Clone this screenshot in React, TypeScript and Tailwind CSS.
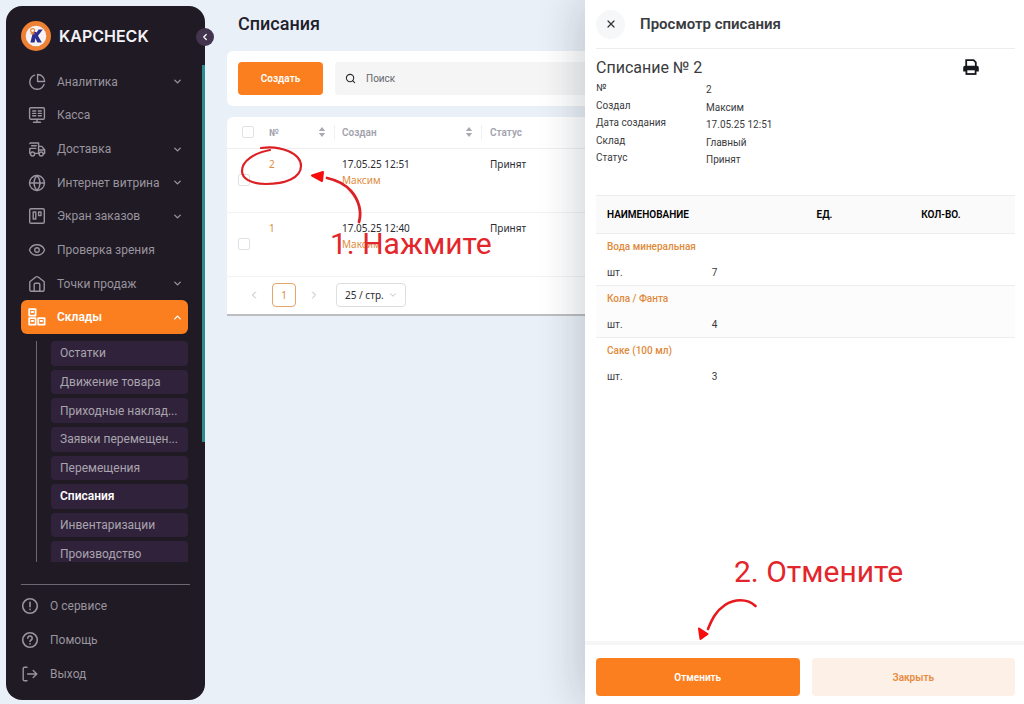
import React from 'react';
import { ChevronDown, ChevronLeft, ChevronRight, ChevronUp, Eye, Globe, Search, X } from 'lucide-react';

const iconProps = {
  width: 18,
  height: 18,
  viewBox: '0 0 18 18',
  fill: 'none',
  stroke: 'currentColor',
  strokeWidth: 1.4,
  strokeLinecap: 'round' as const,
  strokeLinejoin: 'round' as const,
  'aria-hidden': true,
};

const PieIcon = () => (
  <svg {...iconProps}>
    <path d="M6.6 2.1A7.3 7.3 0 1 0 16 11.4" />
    <path d="M9.6 1.5v7h7a7 7 0 0 0-7-7z" />
  </svg>
);

const MonitorIcon = () => (
  <svg {...iconProps}>
    <rect x="1.6" y="1.8" width="14.8" height="11.4" rx="1.2" />
    <path d="M4.7 5h3M4.7 7.4h3M4.7 9.8h3M10.3 5h3M10.3 7.4h3M10.3 9.8h3M9 13.2v3M5.5 16.2h7" />
  </svg>
);

const TruckIcon = () => (
  <svg {...iconProps}>
    <path d="M1.8 3.6Q2 3 2.800 3H10.600v10.400H7M3.600 5.800h4.600M1.800 8.400h6M1.800 8.400v5.200M11 6.400h2.800l2.800 3.400v3.800h-1.200M11 10h5.400" />
    <circle cx="4.6" cy="14" r="2" />
    <circle cx="13.2" cy="14" r="2" />
  </svg>
);

const BoardIcon = () => (
  <svg {...iconProps}>
    <rect x="1.7" y="1.7" width="14.6" height="14.6" rx="1.4" />
    <rect x="5.2" y="5" width="2.6" height="7" />
    <rect x="10.6" y="5" width="2.4" height="3.6" />
  </svg>
);

const HomeIcon = () => (
  <svg {...iconProps}>
    <path d="M1.8 6.800 7.800 2Q9 1.200 10.200 2l6 4.800v8q0 1.500-1.500 1.500H3.300q-1.500 0-1.500-1.500z" />
    <path d="M6.2 16V9.4q0-1.2 1.2-1.2h3.2q1.2 0 1.2 1.2V16" />
  </svg>
);

const BoxesIcon = () => (
  <svg {...iconProps} strokeWidth={1.8}>
    <rect x="1.2" y="1.2" width="6.4" height="6.4" />
    <rect x="1.2" y="10.2" width="6.4" height="6.4" />
    <rect x="10.2" y="10.2" width="6.4" height="6.4" />
    <path d="M3.6 4h1.6M3.6 13h1.6M12.6 13h1.6" />
  </svg>
);

const InfoIcon = () => (
  <svg {...iconProps} strokeWidth={1.6}>
    <circle cx="9" cy="9" r="7.3" />
    <path d="M9 5.2v4.6M9 12.3v.3" />
  </svg>
);

const HelpIcon = () => (
  <svg {...iconProps} strokeWidth={1.6}>
    <circle cx="9" cy="9" r="7.3" />
    <path d="M6.8 7.2a2.2 2.2 0 1 1 3.4 1.8c-.8.5-1.2.8-1.2 1.5M9 12.8v.2" />
  </svg>
);

const ExitIcon = () => (
  <svg {...iconProps}>
    <path d="M6 2.2H3.6q-1.4 0-1.4 1.4v10.8q0 1.4 1.4 1.4H6M6.6 9h9M12.2 5.4 15.8 9l-3.6 3.6" />
  </svg>
);

const Logo = () => (
  <svg width="30" height="30" viewBox="0 0 30 30" aria-hidden="true">
    <circle cx="15" cy="15" r="15" fill="#ee8133" />
    <circle cx="15" cy="15" r="10.3" fill="#f6f3f5" />
    <path d="M12 11h3.600l-2 10.500H9.400z" fill="#2c2f8e" />
    <path d="M17.600 8.500h4.200L17 14.800l3.800 6.700h-4.400L13.200 15z" fill="#2c2f8e" />
    <circle cx="11.6" cy="9.6" r="2" fill="none" stroke="#ee8133" strokeWidth="1.1" />
    <path d="M9.6 12.8h4" stroke="#ee8133" strokeWidth="1.1" />
  </svg>
);

const PrintIcon = () => (
  <svg width="16" height="16" viewBox="0 0 16 16" aria-hidden="true">
    <path d="M3.2 8V1.200h7.400l2.200 2.200V8" fill="#fff" stroke="#16181d" strokeWidth="1.8" />
    <path d="M2.400 6.800h11.200A2 2 0 0 1 15.800 8.800v3.800H.2V8.800a2 2 0 0 1 2.200-2z" fill="#16181d" />
    <rect x="3.4" y="10.4" width="9.2" height="4.6" fill="#fff" stroke="#16181d" strokeWidth="1.8" />
  </svg>
);

const SortIcon = () => (
  <svg width="8" height="10" viewBox="0 0 8 10" fill="#a9a9b0" aria-hidden="true">
    <path d="M4 0 7.2 4H.8zM4 10 .8 6h6.4z" />
  </svg>
);

const menu = [
  { label: 'Аналитика', icon: <PieIcon />, nested: true },
  { label: 'Касса', icon: <MonitorIcon />, nested: false },
  { label: 'Доставка', icon: <TruckIcon />, nested: true },
  { label: 'Интернет витрина', icon: <Globe size={18} strokeWidth={1.8} />, nested: true },
  { label: 'Экран заказов', icon: <BoardIcon />, nested: true },
  { label: 'Проверка зрения', icon: <Eye size={18} strokeWidth={1.8} />, nested: false },
  { label: 'Точки продаж', icon: <HomeIcon />, nested: true },
];

const submenu = [
  'Остатки',
  'Движение товара',
  'Приходные наклад...',
  'Заявки перемещен...',
  'Перемещения',
  'Списания',
  'Инвентаризации',
  'Производство',
];

const bottomMenu = [
  { label: 'О сервисе', icon: <InfoIcon /> },
  { label: 'Помощь', icon: <HelpIcon /> },
  { label: 'Выход', icon: <ExitIcon /> },
];

const documents = [
  { id: 2, date: '17.05.25 12:51', author: 'Максим', status: 'Принят' },
  { id: 1, date: '17.05.25 12:40', author: 'Максим', status: 'Принят' },
];

const details = [
  ['№', '2'],
  ['Создал', 'Максим'],
  ['Дата создания', '17.05.25 12:51'],
  ['Склад', 'Главный'],
  ['Статус', 'Принят'],
];

const products = [
  { name: 'Вода минеральная', unit: 'шт.', count: 7 },
  { name: 'Кола / Фанта', unit: 'шт.', count: 4 },
  { name: 'Саке (100 мл)', unit: 'шт.', count: 3 },
];

function Sidebar() {
  return (
    <aside className="relative mt-1.5 mb-1 ml-1.5 flex w-[199px] shrink-0 flex-col rounded-2xl bg-[#1f1a24] px-[15px] text-xs text-[#99949e]">
      <div className="flex h-[59px] items-center gap-2 text-base font-semibold text-[#f4f2f6]">
        <Logo />
        <span className="font-['Inter',sans-serif]">KAPCHECK</span>
      </div>

      <nav>
        <ul className="grid h-[269px] grid-rows-8">
          {menu.map((item) => (
            <li key={item.label}>
              <a href="#" className="flex h-full items-center pr-[7px] pl-[7px]">
                {item.icon}
                <span className="ml-[11px] flex-1">{item.label}</span>
                {item.nested && <ChevronDown size={11} strokeWidth={3} />}
              </a>
            </li>
          ))}
          <li>
            <a href="#" className="mr-0.5 flex h-full items-center rounded-md bg-[#fc7f1f] pr-[5px] pl-[7px] font-semibold text-white">
              <BoxesIcon />
              <span className="ml-[11px] flex-1">Склады</span>
              <ChevronUp size={11} strokeWidth={3} />
            </a>
          </li>
        </ul>
        <div className="mt-[7px] mr-0.5 ml-[15px] h-[221px] overflow-hidden border-l border-[#6d6773] pl-3.5">
          <ul className="grid h-[225px] grid-rows-8 gap-1">
            {submenu.map((label) => (
              <li key={label} className="min-w-0">
                <a
                  href="#"
                  className={
                    label === 'Списания'
                      ? 'flex h-full items-center rounded bg-[#30223b] px-[9px] font-semibold whitespace-nowrap text-white'
                      : 'flex h-full items-center rounded bg-[#30223b] px-[9px] whitespace-nowrap text-[#aaa4ae]'
                  }
                >
                  {label}
                </a>
              </li>
            ))}
          </ul>
        </div>
      </nav>

      <ul className="mt-[22px] flex flex-col border-t border-[#6d6773] pt-1">
        {bottomMenu.map((item) => (
          <li key={item.label}>
            <a href="#" className="flex h-[34px] items-center gap-[11px]">
              {item.icon}
              {item.label}
            </a>
          </li>
        ))}
      </ul>

      <div className="absolute top-[59px] right-0 h-[377px] w-[3px] bg-[#2c8b90]" />
      <button
        type="button"
        aria-label="Свернуть меню"
        className="absolute top-[22px] -right-[9px] flex size-[18px] items-center justify-center rounded-full bg-[#43354e] text-white"
      >
        <ChevronLeft size={10} strokeWidth={3} />
      </button>
    </aside>
  );
}

function DocumentsPage() {
  return (
    <main className="ml-[22px] min-w-0 flex-1 text-[#2c2c33]">
      <h1 className="ml-[11px] flex h-[51px] items-center pb-1 text-lg font-medium text-[#20202c]">Списания</h1>

      <div className="flex gap-3 rounded-l-md bg-white p-[11px]">
        <button type="button" className="h-[33px] w-[85px] shrink-0 rounded bg-[#fc7f1f] text-[10px] font-semibold text-white">
          Создать
        </button>
        <label className="flex h-[33px] flex-1 items-center gap-2.5 rounded bg-[#f5f5f5] px-2.5 text-[10px]">
          <Search size={11} strokeWidth={2.4} />
          <input type="search" aria-label="Поиск" placeholder="Поиск" className="min-w-0 flex-1 bg-transparent outline-none placeholder:text-[#66666b]" />
        </label>
      </div>

      <div className="mt-[11px] rounded-tl-md border-b-2 border-[#bcbec1] bg-white">
        <table className="w-full table-fixed text-left text-[10px]">
          <thead className="text-[#a2a2ad]">
            <tr className="h-[31px] border-b border-[#efeff1]">
              <th className="w-[34px] pl-[15px]">
                <input type="checkbox" aria-label="Выбрать все" className="block size-3 appearance-none rounded-xs border border-[#e2e2e5] bg-white" />
              </th>
              <th className="w-[74px] pl-2 font-semibold">
                <span className="flex items-center justify-between border-r border-[#f0f0f0] pr-2">№ <SortIcon /></span>
              </th>
              <th className="w-[147px] pl-[7px] font-semibold">
                <span className="flex items-center justify-between border-r border-[#f0f0f0] pr-2">Создан <SortIcon /></span>
              </th>
              <th className="pl-2 font-semibold">Статус</th>
            </tr>
          </thead>
          <tbody className="font-['Noto_Sans',sans-serif]">
            {documents.map((doc) => (
              <tr key={doc.id} className="h-16 border-b border-[#f2f2f4] align-top leading-4">
                <td className="pl-[11px] align-middle">
                  <input type="checkbox" aria-label={`Выбрать ${doc.id}`} className="block size-3 appearance-none rounded-xs border border-[#e2e2e5] bg-white" />
                </td>
                <td className="pt-[7px] pl-2">
                  <a href="#" className="text-[#e08b3c]">{doc.id}</a>
                </td>
                <td className="pt-[7px] pl-[7px]">
                  {doc.date}
                  <a href="#" className="block text-[#e08b3c]">{doc.author}</a>
                </td>
                <td className="pt-[7px] pl-2">{doc.status}</td>
              </tr>
            ))}
          </tbody>
        </table>
        <div className="flex h-[37px] items-center pl-[21px] font-['Noto_Sans',sans-serif] text-[10px]">
          <button type="button" aria-label="Назад" className="text-[#b9b9bd]">
            <ChevronLeft size={12} />
          </button>
          <button type="button" className="mx-3 size-6 rounded border border-[#e6a467] text-[#e08b3c]">1</button>
          <button type="button" aria-label="Вперёд" className="text-[#b9b9bd]">
            <ChevronRight size={12} />
          </button>
          <div className="relative ml-4 flex items-center">
            <select aria-label="Строк на странице" className="h-6 w-[70px] appearance-none rounded border border-[#dedee1] bg-white pl-2">
              <option>25 / стр.</option>
            </select>
            <ChevronDown size={10} className="pointer-events-none absolute right-2 text-[#b9b9bd]" />
          </div>
        </div>
      </div>
    </main>
  );
}

function Drawer() {
  return (
    <section
      aria-label="Просмотр списания"
      className="absolute inset-y-0 right-0 flex w-[439px] flex-col bg-white text-[10px] text-[#3a3b40] shadow-[-6px_0_40px_rgba(20,30,45,0.2)]"
    >
      <div className="flex-1 pr-[9px] pl-[11px]">
        <header className="flex h-[49px] items-center gap-[15px] border-b border-[#ededef]">
          <button type="button" aria-label="Закрыть окно" className="flex size-[29px] items-center justify-center rounded-full bg-[#f6f7f9] text-[#303035]">
            <X size={12} strokeWidth={2.4} />
          </button>
          <h2 className="text-[15px] font-semibold">Просмотр списания</h2>
        </header>

        <div className="flex h-[31px] items-end justify-between pr-9">
          <h3 className="text-base">Списание № 2</h3>
          <button type="button" aria-label="Печать" className="pb-[5px]">
            <PrintIcon />
          </button>
        </div>
        <dl className="grid h-[88px] grid-rows-5">
          {details.map(([label, value]) => (
            <div key={label} className="grid grid-cols-[110px_1fr] leading-4">
              <dt>{label}</dt>
              <dd className="pt-0.5">{value}</dd>
            </div>
          ))}
        </dl>

        <table className="mt-[27px] w-full table-fixed text-left">
          <thead className="bg-[#fafafa] text-black">
            <tr className="h-[38px] border-y border-[#ededef]">
              <th colSpan={2} className="pl-[11px] font-semibold">НАИМЕНОВАНИЕ</th>
              <th className="pl-[11px] font-semibold">ЕД.</th>
              <th className="pl-[11px] font-semibold">КОЛ-ВО.</th>
            </tr>
          </thead>
          {products.map((product) => (
            <tbody key={product.name} className="border-b border-[#ededef] last:border-0 odd:bg-[#fcfcfc]">
              <tr className="h-[26px]">
                <td colSpan={4} className="pl-[11px]">
                  <a href="#" className="font-medium text-[#e08b3c]">{product.name}</a>
                </td>
              </tr>
              <tr className="h-[26px]">
                <td className="pl-[11px]">{product.unit}</td>
                <td className="pl-[11px]">{product.count}</td>
                <td />
                <td />
              </tr>
            </tbody>
          ))}
        </table>
      </div>

      <footer className="flex gap-3 border-t-4 border-[#f6f6f7] pt-[13px] pr-[9px] pb-2 pl-[11px] font-semibold">
        <button type="button" className="h-[38px] flex-1 rounded-sm bg-[#fc7f1f] text-white">Отменить</button>
        <button type="button" className="h-[38px] flex-1 rounded-sm bg-[#fdf0e6] text-[#e88b42]">Закрыть</button>
      </footer>
    </section>
  );
}

// Tutorial marks drawn over the interface
function Hints() {
  return (
    <div className="pointer-events-none text-[#e3262b]">
      <svg className="absolute top-[140px] left-[236px]" width="130" height="86" viewBox="0 0 130 86" fill="none" stroke="#dc2024" strokeLinecap="round" aria-hidden="true">
        <path d="M25 8C44 5 65 13 65 26c0 12-16 18-35 18C14 44 6 38 6 31 6 21 18 13 34 10" strokeWidth="2.2" />
        <path d="M123 82c3-10 0-22-8-31-7-8-15-11-24-13" strokeWidth="2.8" />
        <path d="M76 35.5 87 32l-1 9z" fill="#f80d0d" stroke="#f80d0d" strokeWidth="2" strokeLinejoin="round" />
      </svg>
      <p className="absolute top-[226px] left-[330px] text-[30px] leading-9 whitespace-nowrap">1. Нажмите</p>

      <p className="absolute top-[554px] left-[734px] text-[30px] leading-9 whitespace-nowrap">2. Отмените</p>
      <svg className="absolute top-[594px] left-[692px]" width="70" height="50" viewBox="0 0 70 50" fill="none" stroke="#e8191c" strokeLinecap="round" aria-hidden="true">
        <path d="M63.5 12C55 4 42 5 33 11c-9 6-13 14-17 24" strokeWidth="2.6" />
        <path d="M7 34.500 15.500 40 8.500 45z" fill="#f80d0d" stroke="#f80d0d" strokeWidth="2" strokeLinejoin="round" />
      </svg>
    </div>
  );
}

export default function App() {
  return (
    <div className="relative flex min-h-screen overflow-hidden bg-[#eaf0f7] font-['Roboto',sans-serif]">
      <Sidebar />
      <DocumentsPage />
      <Drawer />
      <Hints />
    </div>
  );
}
